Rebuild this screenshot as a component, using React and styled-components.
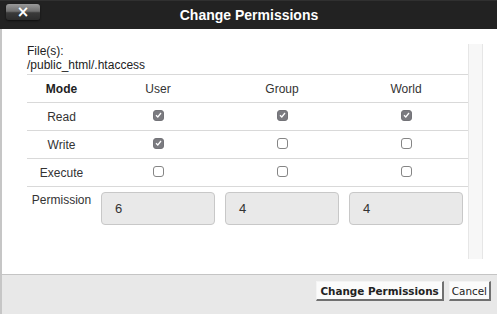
import React from "react";
import styled, { createGlobalStyle } from "styled-components";

const Global = createGlobalStyle`
  html, body { margin: 0; padding: 0; background: #fff; }
  body { font-family: "Liberation Sans", Arial, sans-serif; }
`;

const Dialog = styled.div`
  width: 497px;
  height: 314px;
  display: flex;
  flex-direction: column;
  overflow: hidden;
`;

const TitleBar = styled.div`
  height: 28px;
  flex: none;
  background: #222222;
  border-top: 1px solid #303030;
  display: flex;
  align-items: center;
  position: relative;
`;

const CloseButton = styled.button`
  position: absolute;
  left: 6px;
  top: 3px;
  width: 34px;
  height: 16px;
  padding: 0;
  border: none;
  border-radius: 3px;
  background: linear-gradient(#9a9a9a 0%, #707070 45%, #3a3a3a 55%, #2c2c2c 100%);
  box-shadow: 0 1px 2px #0e0e0e;
  color: #fff;
  font: bold 15px/16px "DejaVu Sans", sans-serif;
  display: flex;
  align-items: center;
  justify-content: center;
`;

const Title = styled.h1`
  margin: 0;
  width: 100%;
  text-align: center;
  color: #fff;
  font: bold 14px/16px "Liberation Sans", Arial, sans-serif;
  padding-left: 1px;
`;

const Body = styled.div`
  flex: 1;
  display: flex;
  border-left: 2px solid #c6c6c6;
  padding: 15px 14px 15px 25px;
  background: #fff;
  min-height: 0;
`;

const ScrollPanel = styled.div`
  flex: 1;
  display: flex;
  min-height: 0;
`;

const Content = styled.div`
  width: 441px;
  color: #333;
  font-size: 12px;
  line-height: 14px;
`;

const ScrollTrack = styled.div`
  width: 13px;
  background: #f7f7f7;
  border-left: 1px solid #e6e6e6;
  border-right: 1px solid #e6e6e6;
`;

const FileBlock = styled.div`
  padding-bottom: 2px;
  border-bottom: 1px solid #d9d9d9;
  color: #222;
`;

const Grid = styled.div`
  display: grid;
  grid-template-columns: 69px repeat(3, 124px);
`;

const Cell = styled.div`
  height: 27px;
  border-bottom: 1px solid #d9d9d9;
  display: flex;
  align-items: center;
  justify-content: center;
  font-weight: ${(p) => (p.$bold ? "bold" : "normal")};
  color: ${(p) => (p.$bold ? "#222" : "#333")};
`;

const Box = styled.span`
  width: 11px;
  height: 11px;
  box-sizing: border-box;
  border-radius: 3px;
  margin-bottom: 3px;
  display: flex;
  align-items: center;
  justify-content: center;
  background: ${(p) => (p.$checked ? "#7b7b80" : "#fff")};
  border: 1px solid ${(p) => (p.$checked ? "#737378" : "#858585")};
`;

const LabelCell = styled.div`
  padding-top: 6px;
  text-align: center;
  color: #333;
`;

const InputCell = styled.div`
  padding: 5px 5px 0;
`;

const NumberBox = styled.div`
  height: 33px;
  box-sizing: border-box;
  border: 1px solid #c8c8c8;
  border-radius: 4px;
  background: #e9e9e9;
  padding-left: 13px;
  display: flex;
  align-items: center;
  font-size: 13px;
  color: #333;
`;

const Footer = styled.div`
  height: 33px;
  flex: none;
  background: #e8e8e8;
  border-top: 1px solid #c4c4c4;
  border-left: 2px solid #c6c6c6;
  display: flex;
  justify-content: flex-end;
  align-items: flex-start;
  padding: 6px 6px 0 0;
  gap: 5px;
`;

const Button = styled.button`
  height: 20px;
  margin: 0;
  padding: 0 ${(p) => (p.$primary ? "3px" : "2px")};
  background: #fbfbfb;
  border-style: solid;
  border-width: 1px 2px 2px 1px;
  border-color: #f4f4f4 #707070 #707070 #f4f4f4;
  font-family: "DejaVu Sans", Verdana, sans-serif;
  font-size: 10.4px;
  font-weight: ${(p) => (p.$primary ? "bold" : "normal")};
  color: #222;
  line-height: 16px;
`;

const Check = () => (
  <svg width="7" height="6" viewBox="0 0 7 6">
    <path d="M1 3.2 L2.8 5 L6 1" fill="none" stroke="#fff" strokeWidth="1.3" />
  </svg>
);

const rows = [
  ["Read", [true, true, true]],
  ["Write", [true, false, false]],
  ["Execute", [false, false, false]],
];

export default function App() {
  return (
    <>
      <Global />
      <Dialog>
        <TitleBar>
          <CloseButton aria-label="Close">×</CloseButton>
          <Title>Change Permissions</Title>
        </TitleBar>
        <Body>
          <ScrollPanel>
            <Content>
              <FileBlock>
                File(s):
                <br />
                /public_html/.htaccess
              </FileBlock>
              <Grid>
                <Cell $bold>Mode</Cell>
                <Cell>User</Cell>
                <Cell>Group</Cell>
                <Cell>World</Cell>
                {rows.map(([name, vals]) => (
                  <React.Fragment key={name}>
                    <Cell>{name}</Cell>
                    {vals.map((v, i) => (
                      <Cell key={i}>
                        <Box $checked={v}>{v && <Check />}</Box>
                      </Cell>
                    ))}
                  </React.Fragment>
                ))}
                <LabelCell>Permission</LabelCell>
                <InputCell><NumberBox>6</NumberBox></InputCell>
                <InputCell><NumberBox>4</NumberBox></InputCell>
                <InputCell><NumberBox>4</NumberBox></InputCell>
              </Grid>
            </Content>
            <ScrollTrack />
          </ScrollPanel>
        </Body>
        <Footer>
          <Button $primary>Change Permissions</Button>
          <Button>Cancel</Button>
        </Footer>
      </Dialog>
    </>
  );
}
